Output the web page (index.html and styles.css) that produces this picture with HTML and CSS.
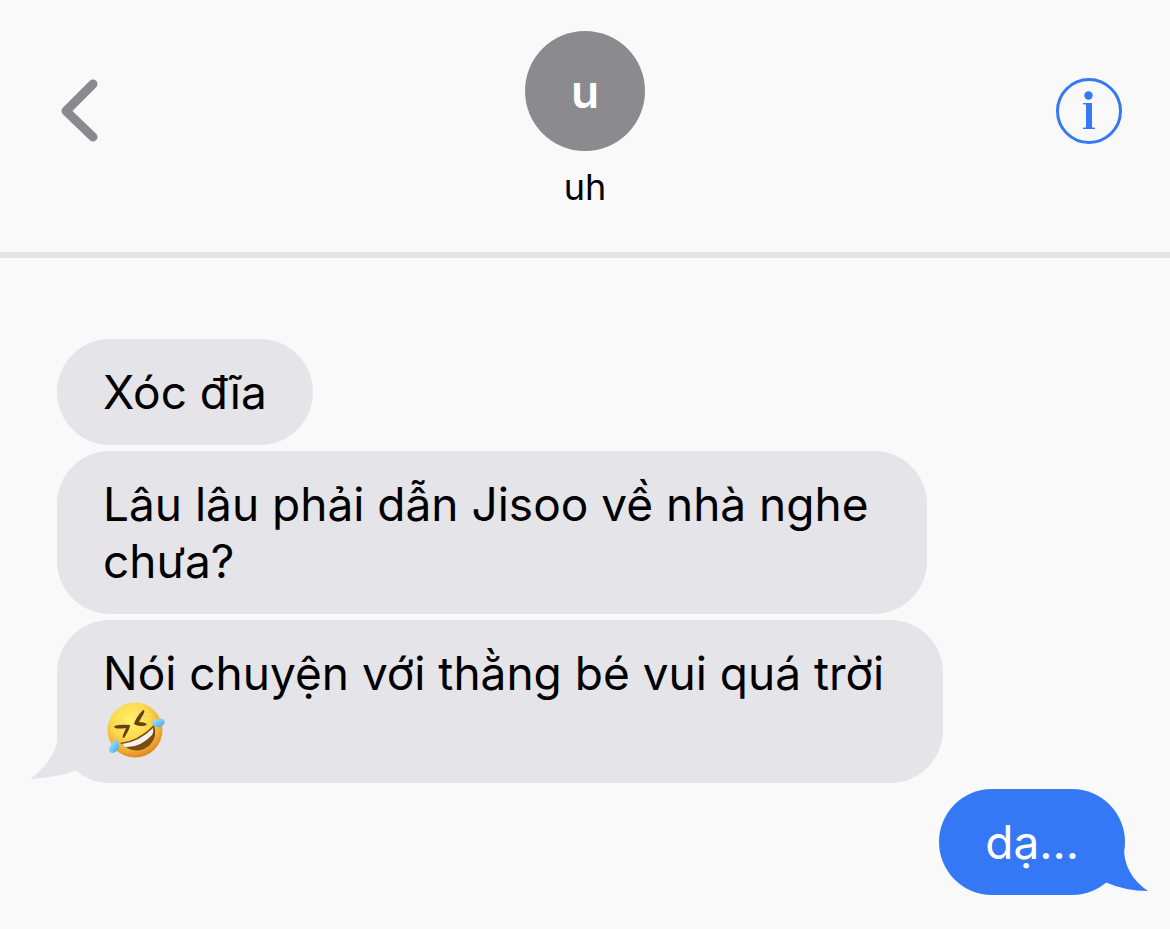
FILE: index.html
```html
<!DOCTYPE html>
<html lang="vi">
<head>
    <meta charset="UTF-8">
    <meta name="viewport" content="width=device-width, initial-scale=1.0">
    <title>uh</title>
    <link rel="stylesheet" href="styles.css">
</head>
<body>
    <header class="chat-header">
        <button class="icon-button back" type="button" aria-label="Back">
            <svg width="38" height="64" viewBox="0 0 38 64">
                <path d="M33 6 L6 33 L33 59" fill="none" stroke="#8a898e" stroke-width="9" stroke-linecap="round" stroke-linejoin="round"/>
            </svg>
        </button>
        <div class="contact">
            <div class="avatar">u</div>
            <div class="name">uh</div>
        </div>
        <button class="icon-button info" type="button" aria-label="Info">
            <svg width="66" height="66" viewBox="0 0 66 66" fill="#3478f6">
                <circle cx="33" cy="33" r="31.5" fill="none" stroke="#3478f6" stroke-width="3"/>
                <circle cx="32.5" cy="17.5" r="4.2"/>
                <path d="M27 25 H36 V49.5 L39 49.8 V51 H27 V49.8 L30 49.5 V26.5 L27 26.2 Z"/>
            </svg>
        </button>
    </header>

    <main class="messages">
        <div class="bubble received">Xóc đĩa</div>
        <div class="bubble received">Lâu lâu phải dẫn Jisoo về nhà nghe&nbsp;<br>chưa?</div>
        <div class="bubble received">Nói chuyện với thằng bé vui quá trời&nbsp;<br><svg class="emoji" role="img" aria-label="🤣" viewBox="0 0 64 57">
                <defs>
                    <radialGradient id="face" cx="0.42" cy="0.32" r="0.7">
                        <stop offset="0" stop-color="#fff16b"/>
                        <stop offset="0.5" stop-color="#fcd84c"/>
                        <stop offset="0.8" stop-color="#f1ab35"/>
                        <stop offset="1" stop-color="#dc8422"/>
                    </radialGradient>
                    <linearGradient id="tear" x1="0" y1="0" x2="1" y2="1">
                        <stop offset="0" stop-color="#b5ecfd"/>
                        <stop offset="1" stop-color="#3ba6e8"/>
                    </linearGradient>
                </defs>
                <circle cx="32" cy="28" r="27.5" fill="url(#face)"/>
                <path d="M11 24 Q18 22 27 23 Q27 27 21 36 Q19 36 20 33 L23 26 Q16 27 12 26 Z" fill="#64400f"/>
                <path d="M40 8 Q42 8 41 11 L36 20 Q41 20 44 22 Q43 24 40 24 Q34 24 31 22 Q33 15 40 8 Z" fill="#64400f"/>
                <path d="M17 41 Q35 39 51 23 Q55 34 47 43 Q33 55 17 41 Z" fill="#7b4c10"/>
                <path d="M19 42 Q36 40 50 26 Q51 30 49 33 Q37 46 22 45 Z" fill="#f5f1ee"/>
                <path d="M48 21 Q56 14 61 18 Q63 21 59 24 Q54 27 48 21 Z" fill="url(#tear)"/>
                <path d="M14 37 Q18 45 14 49 Q9 53 6 49 Q6 42 14 37 Z" fill="url(#tear)"/>
            </svg><svg class="tail" width="47" height="46" viewBox="0 0 47 46">
                <path d="M28 0 Q27 25 0 45 Q26 44 47 36 V0 Z" fill="#e5e4e9"/>
            </svg></div>
        <div class="bubble sent">dạ...<svg class="tail" width="47" height="46" viewBox="0 0 47 46">
                <path d="M23 0 Q22 28 47 45 Q24 45 4 36 L0 0 Z" fill="#3478f6"/>
            </svg></div>
    </main>
</body>
</html>
```
FILE: styles.css
```css
* {
    box-sizing: border-box;
}
body {
    margin: 0;
    background-color: #f9f9f9;
    color: #000;
    font-family: Inter, "Noto Sans", sans-serif;
}
.chat-header {
    display: grid;
    grid-template-columns: 1fr auto 1fr;
    align-items: start;
    padding: 31px 48px 45px;
    border-bottom: 6px solid #e5e4e9;
}
.icon-button {
    display: block;
    margin-top: 47px;
    padding: 0;
    border: none;
    background: none;
    cursor: pointer;
}
.icon-button svg {
    display: block;
}
.back {
    justify-self: start;
    margin-left: 12px;
}
.info {
    justify-self: end;
}
.contact {
    text-align: center;
}
.avatar {
    display: flex;
    align-items: center;
    justify-content: center;
    width: 120px;
    height: 120px;
    border-radius: 50%;
    background-color: #8b8a8f;
    color: #fff;
    font-size: 46px;
    font-weight: 600;
}
.name {
    margin-top: 16px;
    font-size: 36px;
    line-height: 40px;
}
.messages {
    display: flex;
    flex-direction: column;
    align-items: flex-start;
    gap: 6px;
    padding: 81px 45px 34px 57px;
}
.bubble {
    position: relative;
    padding: 25px 46px 24px;
    border-radius: 53px;
    font-size: 46px;
    line-height: 57px;
}
.received {
    background-color: #e5e4e9;
}
.sent {
    align-self: flex-end;
    background-color: #3478f6;
    color: #fff;
}
.tail {
    position: absolute;
    bottom: 3px;
}
.received .tail {
    left: -27px;
}
.sent .tail {
    right: -23px;
}
.emoji {
    display: block;
    width: 64px;
    height: 57px;
}
```
